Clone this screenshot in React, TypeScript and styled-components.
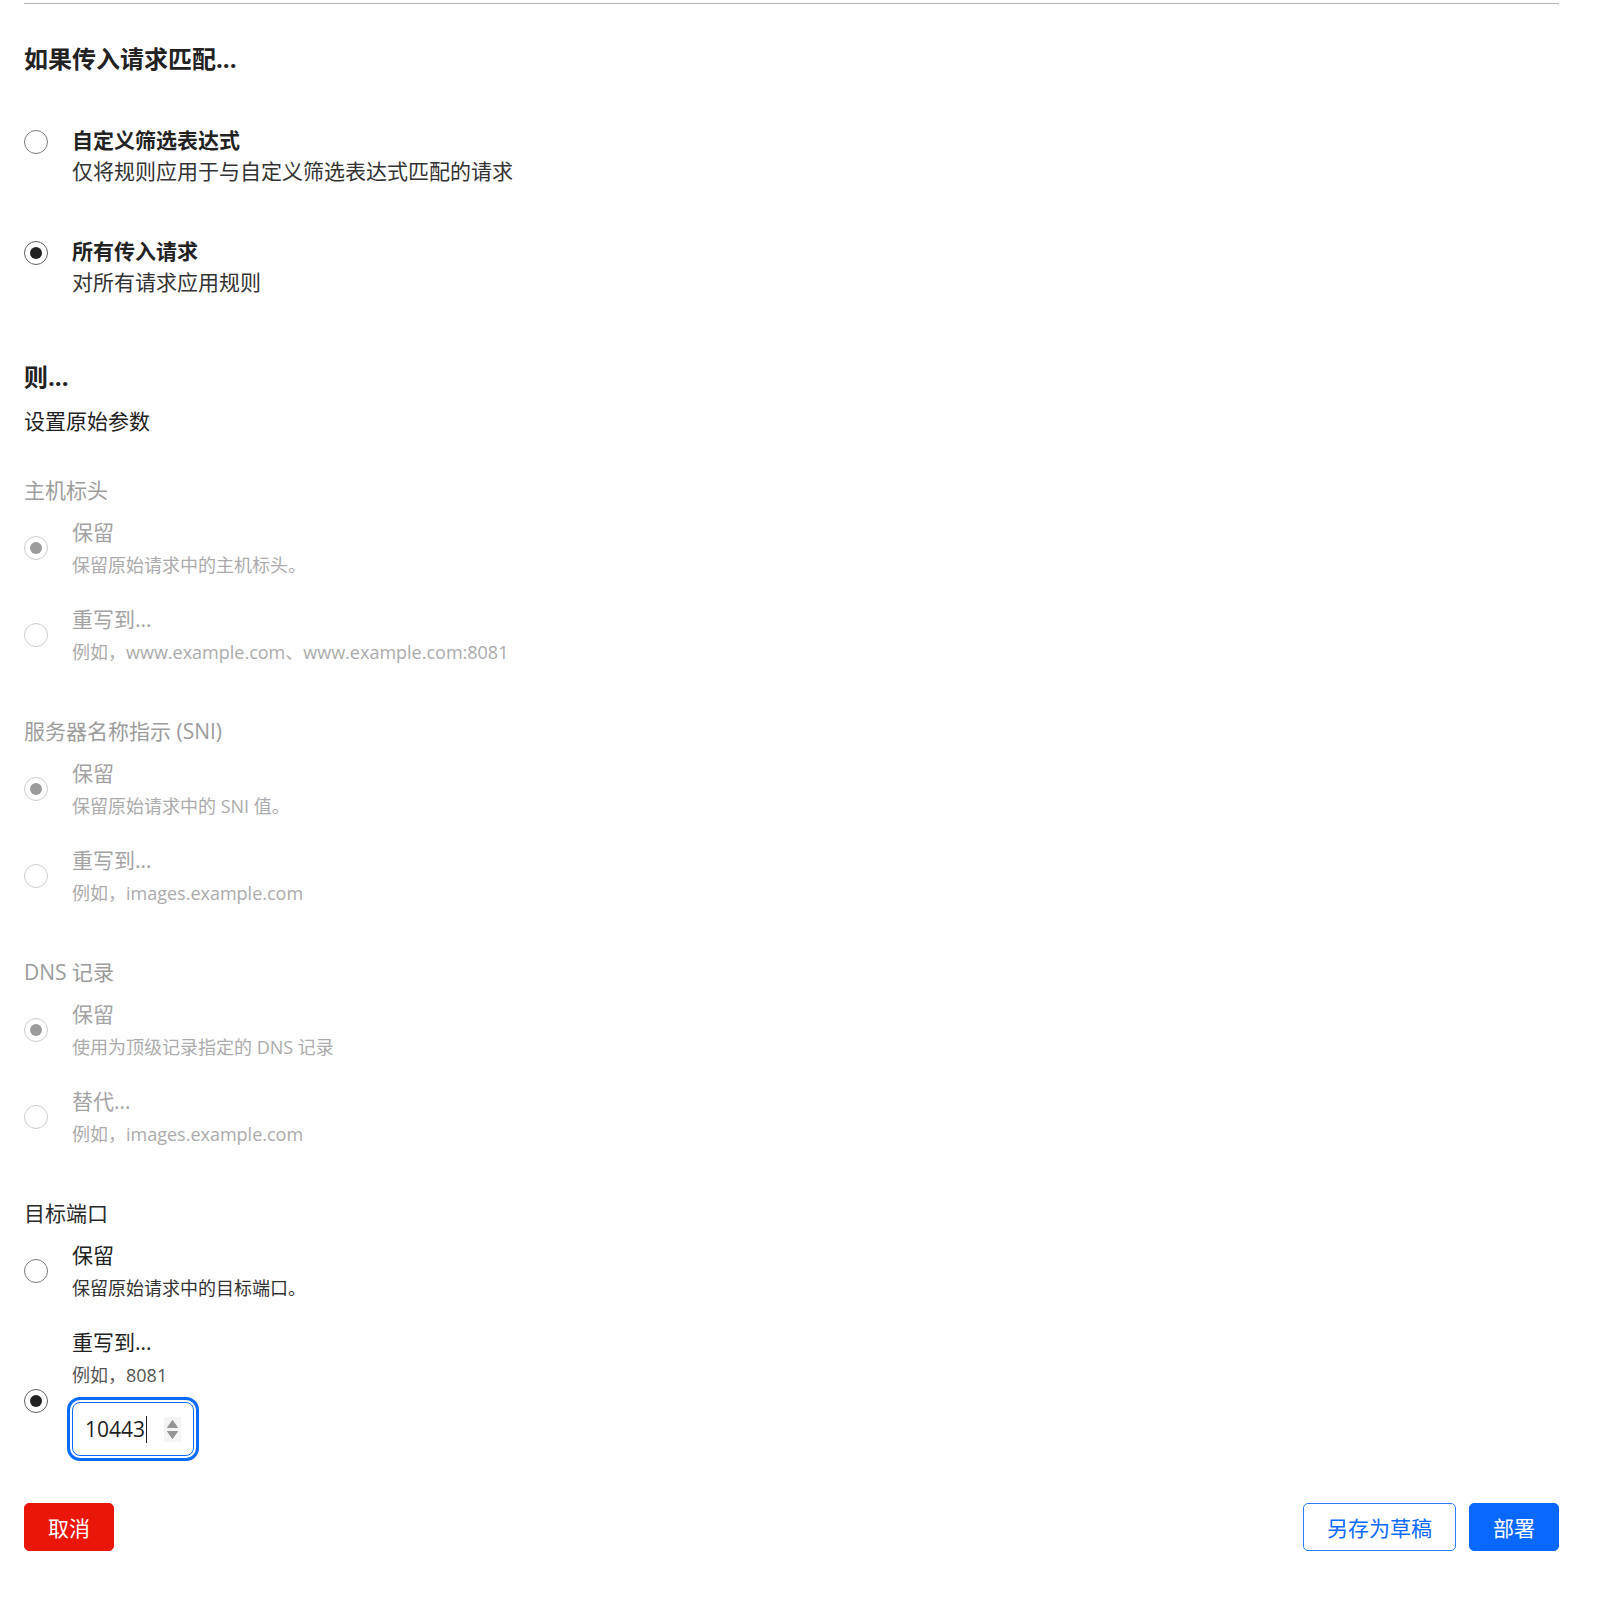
import React from "react";
import styled, { createGlobalStyle, css } from "styled-components";

const GlobalStyle = createGlobalStyle`
  html, body { margin: 0; padding: 0; background: #ffffff; }
  body {
    font-family: "Open Sans", "Noto Sans CJK SC", "Noto Sans", sans-serif;
    color: #222222;
    -webkit-font-smoothing: antialiased;
  }
  * { box-sizing: border-box; }
`;

const Page = styled.div`
  padding: 3px 44px 47px 24px;
`;

const Divider = styled.hr`
  margin: 0;
  border: 0;
  border-top: 1px solid #b4b4b4;
`;

const SectionTitle = styled.h2<{ $mt: number }>`
  margin: ${(p) => p.$mt}px 0 0;
  font-size: 24px;
  line-height: 32px;
  font-weight: 700;
  color: #222222;
`;

const MatchList = styled.div`
  margin-top: 50px;
  display: flex;
  flex-direction: column;
  gap: 50px;
`;

const OptionRow = styled.label<{ $align: "start" | "center" }>`
  display: flex;
  gap: 24px;
  align-items: ${(p) => (p.$align === "start" ? "flex-start" : "center")};
`;

const Radio = styled.span<{ $checked?: boolean; $disabled?: boolean; $mt?: number }>`
  flex: none;
  width: 24px;
  height: 24px;
  margin-top: ${(p) => p.$mt ?? 0}px;
  border-radius: 50%;
  background: #ffffff;
  display: flex;
  align-items: center;
  justify-content: center;
  border: 1px solid ${(p) => (p.$disabled ? "#cdcdcd" : p.$checked ? "#5f5f5f" : "#7a7a7a")};
  ${(p) =>
    p.$checked &&
    css`
      &::after {
        content: "";
        width: 12px;
        height: 12px;
        border-radius: 50%;
        background: ${p.$disabled ? "#9b9b9b" : "#222222"};
      }
    `}
`;

const OptionText = styled.div`
  display: flex;
  flex-direction: column;
  min-width: 0;
`;

const OptionLabel = styled.span<{ $bold?: boolean; $disabled?: boolean; $compact?: boolean }>`
  font-size: 21px;
  line-height: ${(p) => (p.$compact ? 28 : 30)}px;
  font-weight: ${(p) => (p.$bold ? 700 : 400)};
  color: ${(p) => (p.$disabled ? "#a3a3a3" : "#222222")};
`;

const OptionDesc = styled.span<{ $large?: boolean; $tone: "dark" | "mid" | "muted" }>`
  font-size: ${(p) => (p.$large ? 21 : 18)}px;
  line-height: ${(p) => (p.$large ? 30 : 26)}px;
  margin-top: ${(p) => (p.$large ? 1 : 6)}px;
  color: ${(p) => (p.$tone === "dark" ? "#333333" : p.$tone === "mid" ? "#555555" : "#ababab")};
`;

const SubTitle = styled.p`
  margin: 13px 0 0;
  font-size: 21px;
  line-height: 30px;
  color: #222222;
`;

const GroupList = styled.div`
  margin-top: 39px;
  display: flex;
  flex-direction: column;
  gap: 51px;
`;

const Group = styled.div`
  display: flex;
  flex-direction: column;
`;

const GroupHeading = styled.span<{ $disabled?: boolean }>`
  font-size: 21px;
  line-height: 30px;
  color: ${(p) => (p.$disabled ? "#9c9c9c" : "#2a2a2a")};
`;

const GroupOptions = styled.div`
  margin-top: 13px;
  display: flex;
  flex-direction: column;
  gap: 27px;
`;

const NumberField = styled.div`
  margin-top: 14px;
  width: 122px;
  height: 54px;
  border: 1px solid #0a6cff;
  border-radius: 8px;
  outline: 3px solid #0a6cff;
  outline-offset: 2px;
  padding: 0 12px;
  display: flex;
  align-items: center;
`;

const FieldValue = styled.span`
  font-size: 21px;
  line-height: 30px;
  color: #1e1e1e;
`;

const Caret = styled.span`
  width: 1px;
  height: 27px;
  margin-left: 1px;
  background: #1e1e1e;
`;

const FieldSpacer = styled.span`
  flex: 1;
`;

const Footer = styled.div`
  margin-top: 47px;
  display: flex;
  align-items: center;
`;

const FooterRight = styled.div`
  margin-left: auto;
  display: flex;
  gap: 13px;
`;

const Button = styled.button<{ $variant: "danger" | "outline" | "primary" }>`
  height: 48px;
  padding: 0 23px;
  border-radius: 5px;
  font-family: "Noto Sans CJK SC", sans-serif;
  font-size: 21px;
  line-height: 30px;
  cursor: pointer;
  ${(p) =>
    p.$variant === "danger"
      ? css`
          background: #ea1609;
          border: 1px solid #ea1609;
          color: #ffffff;
        `
      : p.$variant === "outline"
      ? css`
          background: #ffffff;
          border: 1.5px solid #2a7cf7;
          color: #0a6cff;
        `
      : css`
          background: #0868ff;
          border: 1px solid #0868ff;
          color: #ffffff;
        `}
`;

const Spinner = () => (
  <svg width="17" height="25" viewBox="0 0 17 25" aria-hidden="true">
    <rect x="0" y="0" width="17" height="25" fill="#f4f4f4" />
    <path d="M8.5 3.5 L13.5 10.5 L3.5 10.5 Z" fill="#959595" stroke="#959595" strokeWidth="1" strokeLinejoin="round" />
    <path d="M8.5 21.5 L13.5 14.5 L3.5 14.5 Z" fill="#959595" stroke="#959595" strokeWidth="1" strokeLinejoin="round" />
  </svg>
);

type Opt = { label: string; desc: string; checked?: boolean };

const groups: { heading: string; options: Opt[] }[] = [
  {
    heading: "主机标头",
    options: [
      { label: "保留", desc: "保留原始请求中的主机标头。", checked: true },
      { label: "重写到...", desc: "例如，www.example.com、www.example.com:8081" },
    ],
  },
  {
    heading: "服务器名称指示 (SNI)",
    options: [
      { label: "保留", desc: "保留原始请求中的 SNI 值。", checked: true },
      { label: "重写到...", desc: "例如，images.example.com" },
    ],
  },
  {
    heading: "DNS 记录",
    options: [
      { label: "保留", desc: "使用为顶级记录指定的 DNS 记录", checked: true },
      { label: "替代...", desc: "例如，images.example.com" },
    ],
  },
];

export default function App() {
  return (
    <>
      <GlobalStyle />
      <Page>
        <Divider />
        <SectionTitle $mt={39}>如果传入请求匹配...</SectionTitle>
        <MatchList>
          <OptionRow $align="start">
            <Radio $mt={5} />
            <OptionText>
              <OptionLabel $bold>自定义筛选表达式</OptionLabel>
              <OptionDesc $large $tone="dark">仅将规则应用于与自定义筛选表达式匹配的请求</OptionDesc>
            </OptionText>
          </OptionRow>
          <OptionRow $align="start">
            <Radio $mt={5} $checked />
            <OptionText>
              <OptionLabel $bold>所有传入请求</OptionLabel>
              <OptionDesc $large $tone="dark">对所有请求应用规则</OptionDesc>
            </OptionText>
          </OptionRow>
        </MatchList>

        <SectionTitle $mt={64}>则...</SectionTitle>
        <SubTitle>设置原始参数</SubTitle>

        <GroupList>
          {groups.map((g) => (
            <Group key={g.heading}>
              <GroupHeading $disabled>{g.heading}</GroupHeading>
              <GroupOptions>
                {g.options.map((o) => (
                  <OptionRow $align="center" key={o.label}>
                    <Radio $disabled $checked={o.checked} />
                    <OptionText>
                      <OptionLabel $compact $disabled>{o.label}</OptionLabel>
                      <OptionDesc $tone="muted">{o.desc}</OptionDesc>
                    </OptionText>
                  </OptionRow>
                ))}
              </GroupOptions>
            </Group>
          ))}

          <Group>
            <GroupHeading>目标端口</GroupHeading>
            <GroupOptions>
              <OptionRow $align="center">
                <Radio />
                <OptionText>
                  <OptionLabel $compact>保留</OptionLabel>
                  <OptionDesc $tone="dark">保留原始请求中的目标端口。</OptionDesc>
                </OptionText>
              </OptionRow>
              <OptionRow $align="start">
                <Radio $checked $mt={61} />
                <OptionText>
                  <OptionLabel $compact>重写到...</OptionLabel>
                  <OptionDesc $tone="mid">例如，8081</OptionDesc>
                  <NumberField>
                    <FieldValue>10443</FieldValue>
                    <Caret />
                    <FieldSpacer />
                    <Spinner />
                  </NumberField>
                </OptionText>
              </OptionRow>
            </GroupOptions>
          </Group>
        </GroupList>

        <Footer>
          <Button $variant="danger">取消</Button>
          <FooterRight>
            <Button $variant="outline">另存为草稿</Button>
            <Button $variant="primary">部署</Button>
          </FooterRight>
        </Footer>
      </Page>
    </>
  );
}
